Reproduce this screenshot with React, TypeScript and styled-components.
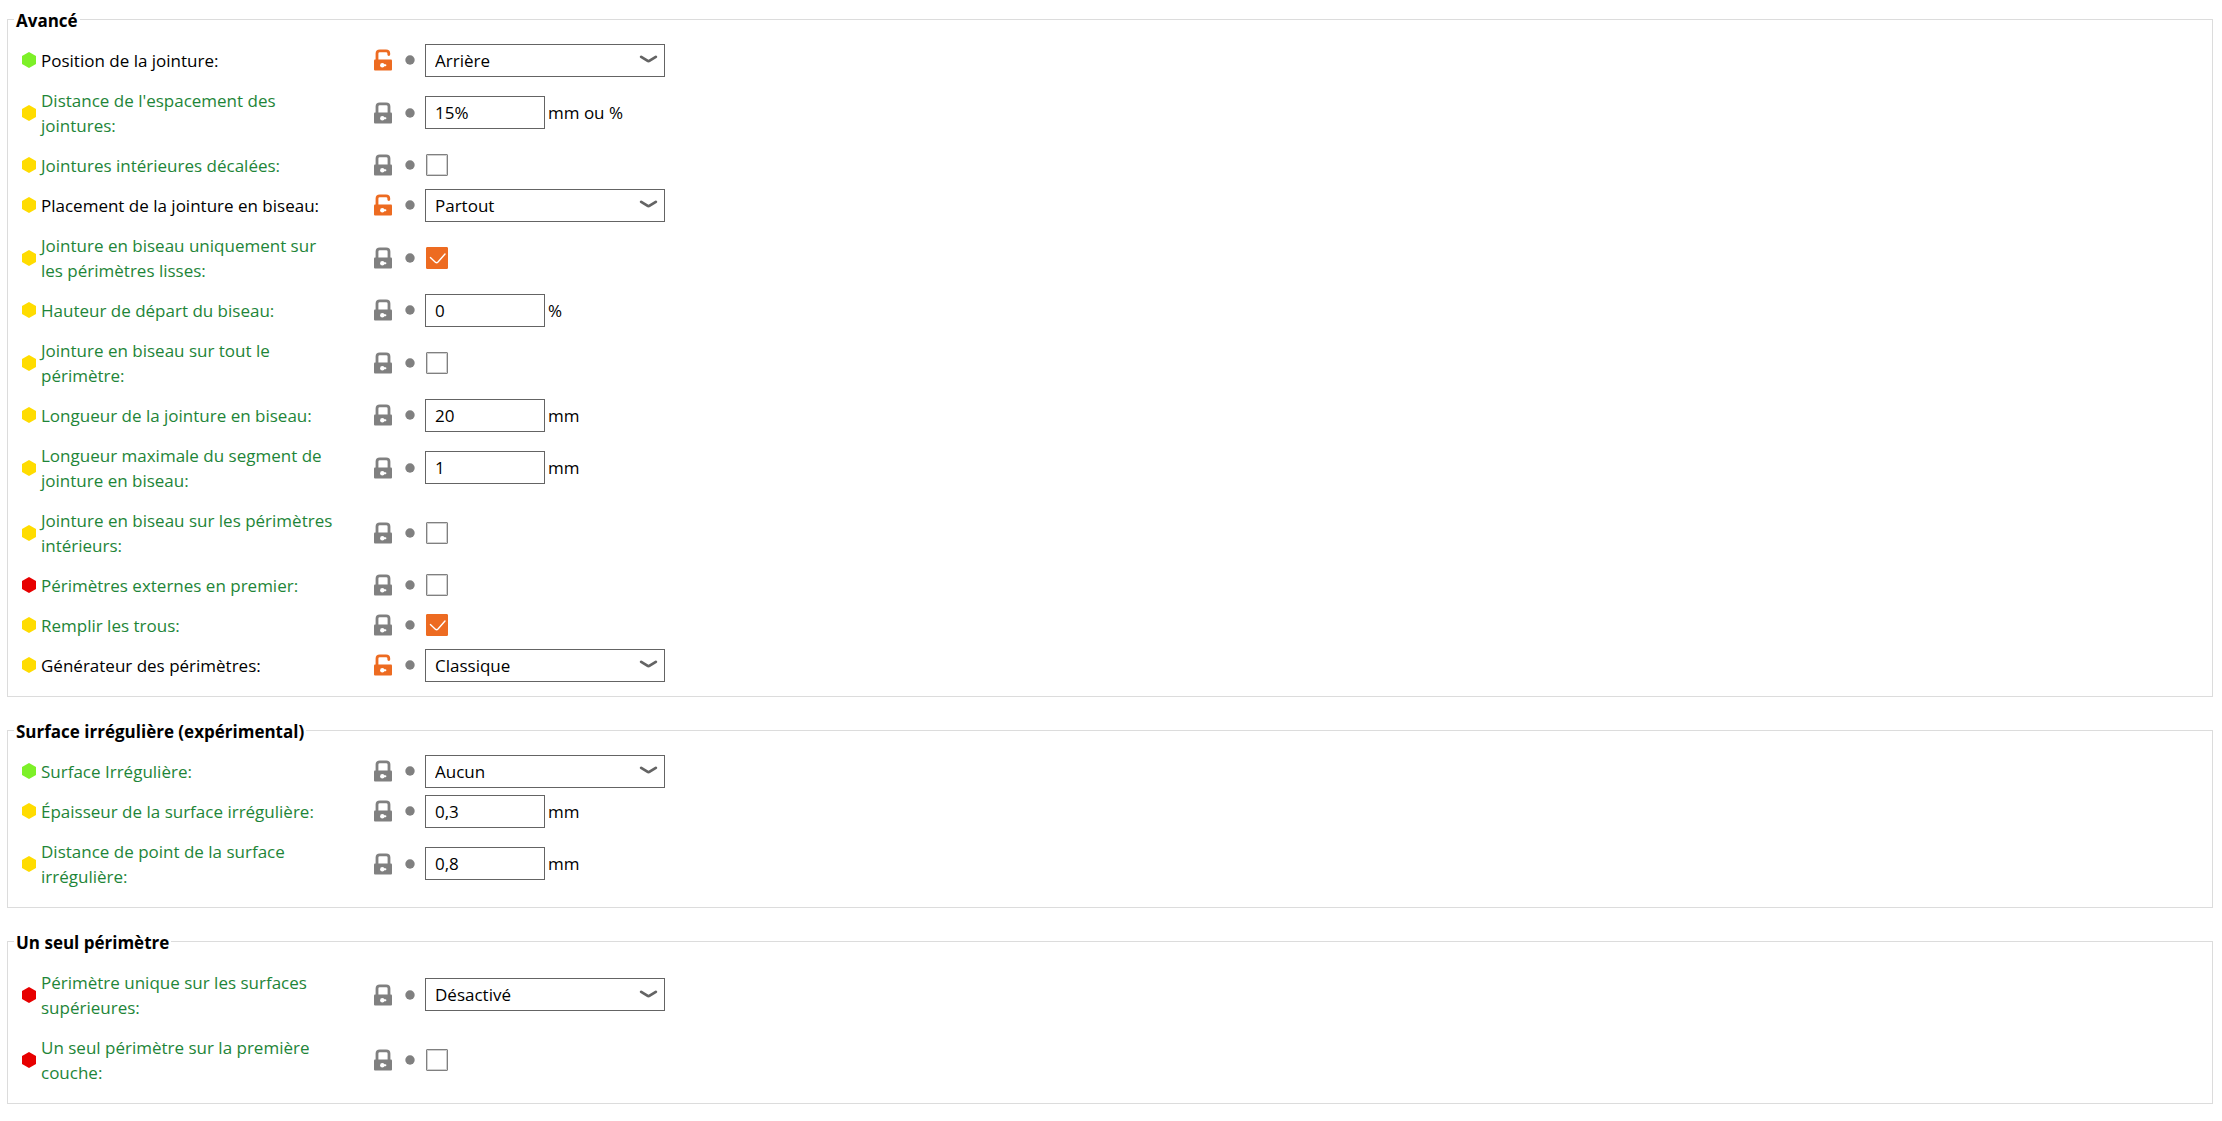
import React, { useId } from "react";
import styled, { createGlobalStyle } from "styled-components";

const GlobalStyle = createGlobalStyle`
  *, *::before, *::after {
    box-sizing: border-box;
  }
  body {
    margin: 0;
    background: #ffffff;
    color: #000000;
    font-family: "Open Sans", "Noto Sans", sans-serif;
    font-size: 17px;
    line-height: 25px;
  }
  button, input, select {
    margin: 0;
    font: inherit;
    color: inherit;
  }
`;

type Level = "simple" | "advanced" | "expert";

const levelColors: Record<Level, string> = {
  simple: "#7df028",
  advanced: "#ffdc00",
  expert: "#e70000",
};

const systemGreen = "#1e8538";
const modifiedOrange = "#ed6b21";
const iconGray = "#808080";
const frameGray = "#646464";

type Field =
  | { kind: "choice"; value: string; options: string[] }
  | { kind: "text"; value: string; unit: string }
  | { kind: "check"; checked: boolean };

interface Option {
  label: string;
  level: Level;
  modified?: boolean;
  field: Field;
}

interface OptionGroup {
  title: string;
  options: Option[];
}

const choice = (value: string, ...others: string[]): Field => ({
  kind: "choice",
  value,
  options: [value, ...others],
});
const text = (value: string, unit: string): Field => ({ kind: "text", value, unit });
const check = (checked: boolean): Field => ({ kind: "check", checked });

const groups: OptionGroup[] = [
  {
    title: "Avancé",
    options: [
      { label: "Position de la jointure:", level: "simple", modified: true, field: choice("Arrière") },
      { label: "Distance de l'espacement des jointures:", level: "advanced", field: text("15%", "mm ou %") },
      { label: "Jointures intérieures décalées:", level: "advanced", field: check(false) },
      { label: "Placement de la jointure en biseau:", level: "advanced", modified: true, field: choice("Partout") },
      { label: "Jointure en biseau uniquement sur les périmètres lisses:", level: "advanced", field: check(true) },
      { label: "Hauteur de départ du biseau:", level: "advanced", field: text("0", "%") },
      { label: "Jointure en biseau sur tout le périmètre:", level: "advanced", field: check(false) },
      { label: "Longueur de la jointure en biseau:", level: "advanced", field: text("20", "mm") },
      { label: "Longueur maximale du segment de jointure en biseau:", level: "advanced", field: text("1", "mm") },
      { label: "Jointure en biseau sur les périmètres intérieurs:", level: "advanced", field: check(false) },
      { label: "Périmètres externes en premier:", level: "expert", field: check(false) },
      { label: "Remplir les trous:", level: "advanced", field: check(true) },
      { label: "Générateur des périmètres:", level: "advanced", modified: true, field: choice("Classique") },
    ],
  },
  {
    title: "Surface irrégulière (expérimental)",
    options: [
      { label: "Surface Irrégulière:", level: "simple", field: choice("Aucun") },
      { label: "Épaisseur de la surface irrégulière:", level: "advanced", field: text("0,3", "mm") },
      { label: "Distance de point de la surface irrégulière:", level: "advanced", field: text("0,8", "mm") },
    ],
  },
  {
    title: "Un seul périmètre",
    options: [
      { label: "Périmètre unique sur les surfaces supérieures:", level: "expert", field: choice("Désactivé") },
      { label: "Un seul périmètre sur la première couche:", level: "expert", field: check(false) },
    ],
  },
];

const Page = styled.main`
  display: flex;
  flex-direction: column;
  gap: 20px;
  padding: 6px 9px 16px 7px;
`;

const Group = styled.fieldset`
  min-width: 0;
  margin: 0;
  padding: 7px 8px 11px 14px;
  border: 1px solid #dcdcdc;
`;

const GroupTitle = styled.legend`
  margin-left: -8px;
  padding: 2px 2px 0;
  font-weight: 700;
`;

const OptionRow = styled.div`
  display: grid;
  grid-template-columns: 14px 338px 31px 20px 1fr;
  align-items: center;
  min-height: 40px;
`;

const OptionLabel = styled.label<{ $modified: boolean }>`
  max-width: 300px;
  padding: 8px 0 7px 5px;
  color: ${(p) => (p.$modified ? "#000000" : systemGreen)};
`;

const IconButton = styled.button`
  display: flex;
  justify-self: start;
  padding: 0;
  border: 0;
  background: none;
  cursor: pointer;
`;

const FieldCell = styled.div`
  display: flex;
  align-items: center;
  gap: 3px;
`;

const TextBox = styled.input`
  width: 120px;
  height: 33px;
  padding: 0 9px;
  border: 1px solid ${frameGray};
  border-radius: 0;
  background: #ffffff;
`;

const Stack = styled.span`
  display: inline-grid;
  align-items: center;

  > * {
    grid-area: 1 / 1;
  }
  > svg {
    pointer-events: none;
  }
`;

const ChoiceBox = styled.select`
  appearance: none;
  width: 240px;
  height: 33px;
  padding: 0 32px 0 9px;
  border: 1px solid ${frameGray};
  border-radius: 0;
  background: #ffffff;
`;

const Chevron = styled.svg`
  justify-self: end;
  margin-right: 7px;
`;

const CheckStack = styled(Stack)`
  margin-left: 1px;
`;

const CheckBox = styled.input`
  appearance: none;
  width: 22px;
  height: 22px;
  border: 1px solid #808080;
  border-radius: 1px;
  background: #ffffff;
  box-shadow: inset 0 0 0 1px #d0d0d0;

  &:checked {
    border-color: ${modifiedOrange};
    background: ${modifiedOrange};
    box-shadow: none;
  }
  & + svg {
    visibility: hidden;
  }
  &:checked + svg {
    visibility: visible;
  }
`;

function LevelMark({ level }: { level: Level }) {
  return (
    <svg width="14" height="16" viewBox="0 0 14 16" aria-hidden="true">
      <path d="M7 0.1 L14 4.1 V11.9 L7 15.9 L0 11.9 V4.1 Z" fill={levelColors[level]} />
    </svg>
  );
}

function LockIcon({ open }: { open: boolean }) {
  const color = open ? modifiedOrange : iconGray;
  return (
    <svg width="18" height="22" viewBox="0 0 18 22" aria-hidden="true">
      <path
        d={
          open
            ? "M3 11.5 V4.6 Q3 1.8 5.8 1.8 H12 Q14.8 1.8 14.8 4.6 V5.6"
            : "M3 11.5 V4.6 Q3 1.8 5.8 1.8 H12.2 Q15 1.8 15 4.6 V11.5"
        }
        fill="none"
        stroke={color}
        strokeWidth="2.8"
        strokeLinecap="round"
      />
      <rect x="0" y="10.6" width="18" height="11" rx="1" fill={color} />
      <circle cx="8.3" cy="16.2" r="2.2" fill="#ffffff" />
      <rect x="8.5" y="15.2" width="3.8" height="2" rx="0.8" fill="#ffffff" />
    </svg>
  );
}

function DotIcon() {
  return (
    <svg width="10" height="10" viewBox="0 0 10 10" aria-hidden="true">
      <circle cx="5" cy="5" r="4.7" fill={iconGray} />
    </svg>
  );
}

function FieldControl({ id, field }: { id: string; field: Field }) {
  if (field.kind === "choice") {
    return (
      <Stack>
        <ChoiceBox id={id} defaultValue={field.value}>
          {field.options.map((name) => (
            <option key={name}>{name}</option>
          ))}
        </ChoiceBox>
        <Chevron width="19" height="10" viewBox="0 0 19 10" aria-hidden="true">
          <path
            d="M2.2 1.8 L8.3 5.6 Q9.5 6.5 10.7 5.6 L16.8 1.8"
            fill="none"
            stroke={frameGray}
            strokeWidth="2.7"
            strokeLinecap="round"
          />
        </Chevron>
      </Stack>
    );
  }
  if (field.kind === "text") {
    return (
      <>
        <TextBox id={id} type="text" defaultValue={field.value} />
        <span>{field.unit}</span>
      </>
    );
  }
  return (
    <CheckStack>
      <CheckBox id={id} type="checkbox" defaultChecked={field.checked} />
      <svg width="22" height="22" viewBox="0 0 22 22" aria-hidden="true">
        <path
          d="M4.4 10.6 L9.6 15.4 Q10.8 16.2 12 15 L19 7"
          fill="none"
          stroke="#ffffff"
          strokeWidth="1.4"
          strokeLinecap="round"
        />
      </svg>
    </CheckStack>
  );
}

function OptionLine({ option }: { option: Option }) {
  const id = useId();
  const modified = Boolean(option.modified);
  return (
    <OptionRow>
      <LevelMark level={option.level} />
      <OptionLabel htmlFor={id} $modified={modified}>
        {option.label}
      </OptionLabel>
      <IconButton type="button" aria-label="Valeur système">
        <LockIcon open={modified} />
      </IconButton>
      <IconButton type="button" aria-label="Valeur enregistrée">
        <DotIcon />
      </IconButton>
      <FieldCell>
        <FieldControl id={id} field={option.field} />
      </FieldCell>
    </OptionRow>
  );
}

export default function App() {
  return (
    <>
      <GlobalStyle />
      <Page>
        {groups.map((group) => (
          <Group key={group.title}>
            <GroupTitle>{group.title}</GroupTitle>
            {group.options.map((option) => (
              <OptionLine key={option.label} option={option} />
            ))}
          </Group>
        ))}
      </Page>
    </>
  );
}
